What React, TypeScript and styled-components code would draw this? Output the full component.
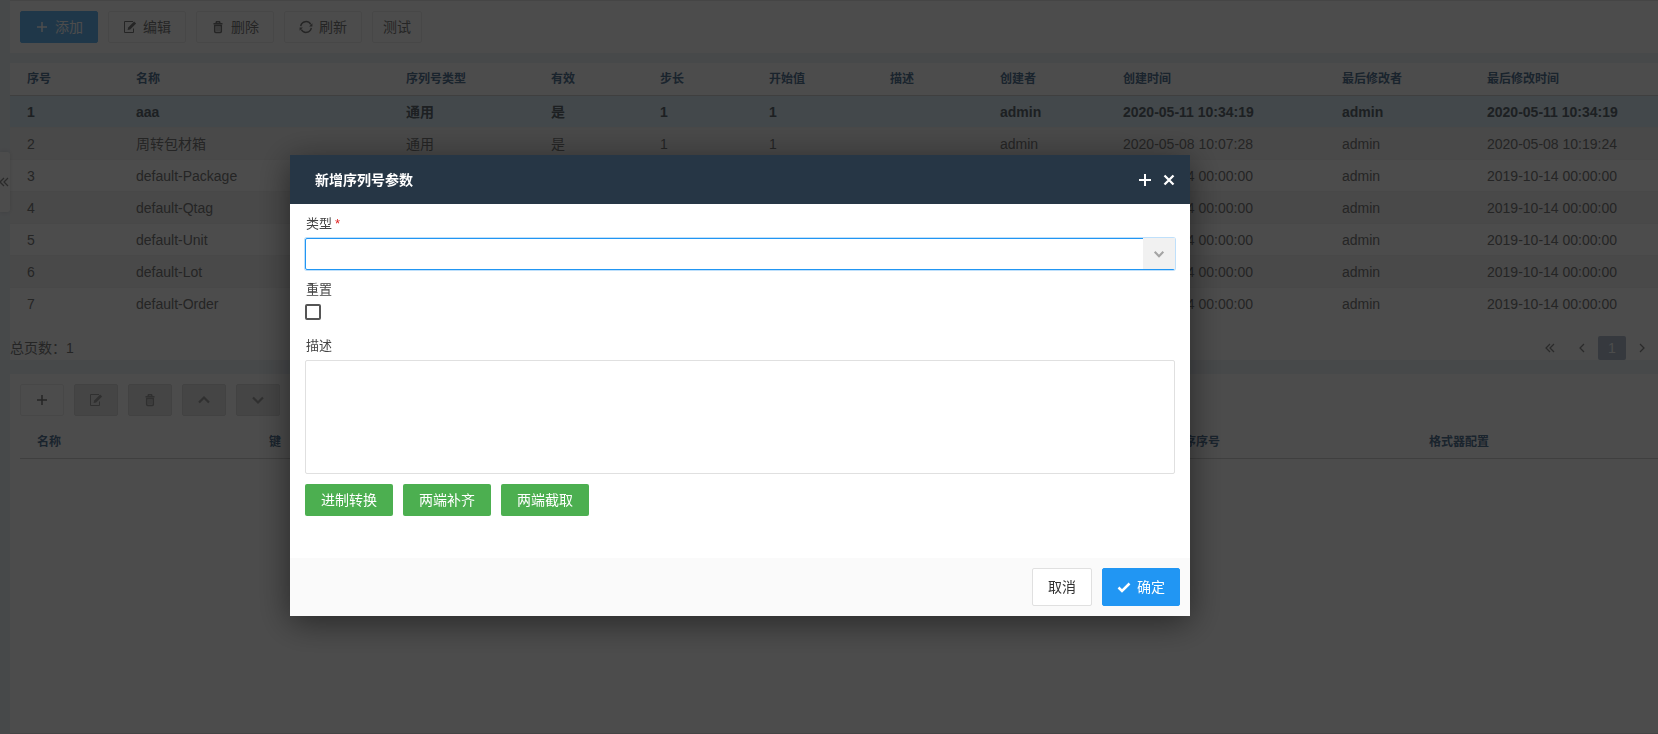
import React from "react";
import styled, { createGlobalStyle, css } from "styled-components";

const GlobalStyle = createGlobalStyle`
  *, *::before, *::after { box-sizing: border-box; }
  body {
    margin: 0;
    background: #eef3f8;
    color: #7c7c7c;
    font: 14px/20px "Liberation Sans", "Noto Sans CJK SC", sans-serif;
  }
  button, input, select, textarea { font: inherit; }
`;

/* ---------- icons ---------- */

const Svg = styled.svg`
  display: block;
  flex: none;
  width: 14px;
  height: 14px;
  fill: none;
  stroke: currentColor;
`;

const PlusIcon = () => (
  <Svg viewBox="0 0 14 14" strokeWidth="1.5">
    <path d="M7 2v10M2 7h10" />
  </Svg>
);

const EditIcon = () => (
  <Svg viewBox="0 0 14 14">
    <path d="M10 1.5H1.5v11h9V8.500" />
    <path d="M4.600 9.900l.6-2.500 5.900-5.900 2 2-5.900 5.900z" fill="currentColor" stroke="none" />
  </Svg>
);

const TrashIcon = () => (
  <Svg viewBox="0 0 14 14">
    <path d="M2.500 3.700h9M5 3.400l.5-1.700h3l.5 1.700" strokeWidth="1.5" />
    <path d="M3.700 5.500h6.600v6q0 1-1 1H4.700q-1 0-1-1z" strokeWidth="1.5" />
    <path d="M6 6.500v4.500M8 6.500v4.500" strokeWidth="0.8" />
  </Svg>
);

const RefreshIcon = () => (
  <Svg viewBox="0 0 14 14" strokeWidth="1.4">
    <path d="M1.700 6.100a5.400 5.400 0 0 1 10-1.800M12.300 7.900a5.400 5.400 0 0 1-10 1.800" />
    <path d="M13.400 3.200v3.300h-3.300zM.6 10.800V7.500h3.300z" fill="currentColor" stroke="none" />
  </Svg>
);

const Chevron = ({ d, weight = 1.25 }: { d: string; weight?: number }) => (
  <Svg viewBox="0 0 14 14" strokeWidth={weight}>
    <path d={d} />
  </Svg>
);

const UP = "M2 9.500L7 4.500l5 5";
const DOWN = "M2 4.500l5 5 5-5";
const LEFT = "M9 3L5 7l4 4";
const RIGHT = "M5 3l4 4-4 4";
const DOUBLE_LEFT = "M7 3L3 7l4 4M11 3L7 7l4 4";

/* ---------- page ---------- */

const Page = styled.main`
  display: flex;
  flex-direction: column;
  min-height: 100vh;
  padding-left: 10px;
`;

const Panel = styled.section<{ $grow?: boolean }>`
  background: #fff;
  ${(p) => p.$grow && css`
    flex: 1;
    padding: 10px 0 0 10px;
    border-bottom: 1px solid #e4e4e4;
  `}
`;

const ToolbarPanel = styled(Panel)`
  padding: 10px;
  margin-bottom: 10px;
  border-top: 1px solid #e8e8e8;
`;

const ListPanel = styled(Panel)`
  margin-bottom: 14px;
`;

const Toolbar = styled.div`
  display: flex;
  gap: 10px;
`;

const ToolButton = styled.button<{ $primary?: boolean; $compact?: boolean }>`
  display: flex;
  align-items: center;
  gap: 6px;
  height: 32px;
  padding: 0 ${(p) => (p.$compact ? 10 : 14)}px;
  border: 1px solid #efefef;
  border-radius: 2px;
  background: #fff;
  color: #7c7c7c;
  &:disabled {
    background: #e6e6e6;
    border-color: #dedede;
    color: #a0a0a0;
  }
  ${(p) => p.$primary && css`
    background: #6ab8f5;
    border-color: #6ab8f5;
    color: #fff;
  `}
`;

const Table = styled.table`
  width: 100%;
  table-layout: fixed;
  border-collapse: separate;
  border-spacing: 0;
`;

const HeadCell = styled.th`
  height: 33px;
  padding: 0 0 0 17px;
  border-bottom: 1px solid #d4d4d4;
  color: #587898;
  font-size: 12px;
  text-align: left;
  white-space: nowrap;
`;

const Cell = styled.td`
  height: 32px;
  padding: 0 0 0 17px;
  border-bottom: 1px solid #f2f2f2;
  white-space: nowrap;
`;

const Row = styled.tr<{ $selected?: boolean }>`
  &:nth-child(even) { background: #f5f5f5; }
  &:last-child td { border-color: transparent; }
  ${(p) => p.$selected && css`
    background: #dff0fa;
    color: #626c74;
    font-weight: bold;
  `}
`;

const DetailTable = styled(Table)`
  margin-top: 10px;
`;

const Pager = styled.nav`
  display: flex;
  align-items: center;
  justify-content: space-between;
  height: 24px;
  margin-top: 16px;
  padding-right: 2px;
`;

const PageButtons = styled.div`
  display: flex;
  gap: 2px;
`;

const PageButton = styled.button<{ $current?: boolean; $wide?: boolean }>`
  display: flex;
  align-items: center;
  justify-content: center;
  width: ${(p) => (p.$wide ? 32 : 28)}px;
  height: 24px;
  padding: 0;
  border: 0;
  border-radius: 2px;
  background: ${(p) => (p.$current ? "#b4bfcf" : "transparent")};
  color: ${(p) => (p.$current ? "#fff" : "#8c8c8c")};
`;

const SideHandle = styled.button`
  position: absolute;
  left: 0;
  top: 152px;
  display: flex;
  align-items: center;
  width: 10px;
  height: 60px;
  padding: 0;
  border: 0;
  border-radius: 0 3px 3px 0;
  background: #fff;
  color: #8c8c8c;
  box-shadow: 0 0 5px rgba(0, 0, 0, 0.12);
  overflow: hidden;
  svg { margin-left: -3px; }
`;

/* ---------- dialog ---------- */

const Backdrop = styled.div`
  position: fixed;
  inset: 0;
  padding: 155px 20px 20px 290px;
  background: rgba(0, 0, 0, 0.7);
`;

const Dialog = styled.div`
  max-width: 900px;
  background: #fff;
  color: #444;
  box-shadow: 0 6px 32px rgba(0, 0, 0, 0.5);
`;

const DialogHeader = styled.header`
  display: flex;
  align-items: center;
  gap: 10px;
  height: 49px;
  padding: 0 14px 0 25px;
  background: #263645;
  color: #fff;
`;

const DialogTitle = styled.h2`
  flex: 1;
  margin: 0;
  font-size: 14px;
`;

const HeaderButton = styled.button`
  padding: 0;
  border: 0;
  background: none;
  color: inherit;
`;

const DialogBody = styled.form`
  display: flex;
  flex-direction: column;
  gap: 10px;
  padding: 10px 15px 42px;
`;

const Field = styled.div`
  display: flex;
  flex-direction: column;
  gap: 4px;
`;

const Label = styled.label`
  padding-left: 1px;
  font-size: 13px;
`;

const Required = styled.span`
  color: #e02020;
  margin-left: 3px;
`;

const SelectBox = styled.div`
  position: relative;
  display: flex;
  border-radius: 2px;
  box-shadow: 0 0 0 1px #bfe0fb;
`;

const Select = styled.select`
  appearance: none;
  width: 100%;
  height: 32px;
  padding: 0 40px 0 8px;
  border: 1px solid #2196f3;
  border-radius: 2px;
  background: #fff;
  outline: none;
`;

const SelectArrow = styled.span`
  position: absolute;
  top: 0;
  right: 0;
  bottom: 1px;
  display: flex;
  align-items: center;
  justify-content: center;
  width: 32px;
  background: #f1f1f1;
  color: #a4a4a4;
  pointer-events: none;
  svg { width: 12px; height: 12px; }
`;

const CheckBox = styled.input`
  appearance: none;
  width: 16px;
  height: 16px;
  margin: 0 0 6px;
  border: 2px solid #555;
  border-radius: 2px;
  background: #fff;
`;

const TextArea = styled.textarea`
  display: block;
  width: 100%;
  height: 114px;
  padding: 6px 8px;
  border: 1px solid #e0e0e0;
  border-radius: 2px;
  resize: none;
`;

const GreenButton = styled.button`
  height: 32px;
  padding: 0 16px;
  border: 0;
  border-radius: 2px;
  background: #4caf50;
  color: #fff;
`;

const DialogFooter = styled.footer`
  display: flex;
  justify-content: flex-end;
  gap: 10px;
  padding: 10px;
  background: #fafafa;
`;

const FooterButton = styled.button<{ $primary?: boolean }>`
  display: flex;
  align-items: center;
  gap: 6px;
  height: 38px;
  padding: 0 ${(p) => (p.$primary ? 14 : 15)}px;
  border: 1px solid ${(p) => (p.$primary ? "#2196f3" : "#e0e0e0")};
  border-radius: 2px;
  background: ${(p) => (p.$primary ? "#2196f3" : "#fff")};
  color: ${(p) => (p.$primary ? "#fff" : "#333")};
`;

/* ---------- data ---------- */

const columns: [string, number][] = [
  ["序号", 109], ["名称", 270], ["序列号类型", 145], ["有效", 109], ["步长", 109], ["开始值", 121],
  ["描述", 110], ["创建者", 123], ["创建时间", 219], ["最后修改者", 145], ["最后修改时间", 188],
];

const detailColumns: [string, number][] = [
  ["名称", 232], ["键", 903], ["排序序号", 257], ["格式器配置", 246],
];

const EPOCH = "2019-10-14 00:00:00";

const record = (name: string, created = EPOCH, modified = EPOCH) => [
  name, "通用", "是", "1", "1", "", "admin", created, "admin", modified,
];

const rows = [
  record("aaa", "2020-05-11 10:34:19", "2020-05-11 10:34:19"),
  record("周转包材箱", "2020-05-08 10:07:28", "2020-05-08 10:19:24"),
  record("default-Package"),
  record("default-Qtag"),
  record("default-Unit"),
  record("default-Lot"),
  record("default-Order"),
];

const TableHead = ({ cols }: { cols: [string, number][] }) => (
  <>
    <colgroup>
      {cols.map(([name, width]) => <col key={name} width={width} />)}
    </colgroup>
    <thead>
      <tr>{cols.map(([name]) => <HeadCell key={name}>{name}</HeadCell>)}</tr>
    </thead>
  </>
);

export default function App() {
  return (
    <>
      <GlobalStyle />
      <Page>
        <ToolbarPanel>
          <Toolbar>
            <ToolButton $primary><PlusIcon />添加</ToolButton>
            <ToolButton><EditIcon />编辑</ToolButton>
            <ToolButton><TrashIcon />删除</ToolButton>
            <ToolButton><RefreshIcon />刷新</ToolButton>
            <ToolButton $compact>测试</ToolButton>
          </Toolbar>
        </ToolbarPanel>

        <ListPanel>
          <Table>
            <TableHead cols={columns} />
            <tbody>
              {rows.map((cells, i) => (
                <Row key={cells[0]} $selected={i === 0}>
                  <Cell>{i + 1}</Cell>
                  {cells.map((text, j) => <Cell key={j}>{text}</Cell>)}
                </Row>
              ))}
            </tbody>
          </Table>
          <Pager aria-label="分页">
            <span>总页数：1</span>
            <PageButtons>
              <PageButton $wide aria-label="首页"><Chevron d={DOUBLE_LEFT} /></PageButton>
              <PageButton aria-label="上一页"><Chevron d={LEFT} /></PageButton>
              <PageButton $current>1</PageButton>
              <PageButton aria-label="下一页"><Chevron d={RIGHT} /></PageButton>
            </PageButtons>
          </Pager>
        </ListPanel>

        <Panel $grow>
          <Toolbar>
            <ToolButton aria-label="添加"><PlusIcon /></ToolButton>
            <ToolButton aria-label="编辑" disabled><EditIcon /></ToolButton>
            <ToolButton aria-label="删除" disabled><TrashIcon /></ToolButton>
            <ToolButton aria-label="上移" disabled><Chevron d={UP} weight={2.25} /></ToolButton>
            <ToolButton aria-label="下移" disabled><Chevron d={DOWN} weight={2.25} /></ToolButton>
          </Toolbar>
          <DetailTable><TableHead cols={detailColumns} /></DetailTable>
        </Panel>
      </Page>

      <SideHandle aria-label="展开"><Chevron d={DOUBLE_LEFT} /></SideHandle>

      <Backdrop>
        <Dialog role="dialog" aria-modal="true" aria-labelledby="dialog-title">
          <DialogHeader>
            <DialogTitle id="dialog-title">新增序列号参数</DialogTitle>
            <HeaderButton aria-label="最大化">
              <Svg viewBox="0 0 14 14" strokeWidth="2"><path d="M7 1v12M1 7h12" /></Svg>
            </HeaderButton>
            <HeaderButton aria-label="关闭">
              <Svg viewBox="0 0 14 14" strokeWidth="2.3"><path d="M2.500 2.500l9 9M11.500 2.500l-9 9" /></Svg>
            </HeaderButton>
          </DialogHeader>
          <DialogBody onSubmit={(e) => e.preventDefault()}>
            <Field>
              <Label htmlFor="type">类型<Required>*</Required></Label>
              <SelectBox>
                <Select id="type" />
                <SelectArrow><Chevron d={DOWN} weight={2.5} /></SelectArrow>
              </SelectBox>
            </Field>
            <Field>
              <Label htmlFor="reset">重置</Label>
              <CheckBox id="reset" type="checkbox" />
            </Field>
            <Field>
              <Label htmlFor="description">描述</Label>
              <TextArea id="description" />
            </Field>
            <Toolbar>
              <GreenButton type="button">进制转换</GreenButton>
              <GreenButton type="button">两端补齐</GreenButton>
              <GreenButton type="button">两端截取</GreenButton>
            </Toolbar>
          </DialogBody>
          <DialogFooter>
            <FooterButton>取消</FooterButton>
            <FooterButton $primary>
              <Svg viewBox="0 0 14 14" strokeWidth="2.5"><path d="M1.500 7.500l3.500 3.500 7.500-7.500" /></Svg>
              确定
            </FooterButton>
          </DialogFooter>
        </Dialog>
      </Backdrop>
    </>
  );
}
